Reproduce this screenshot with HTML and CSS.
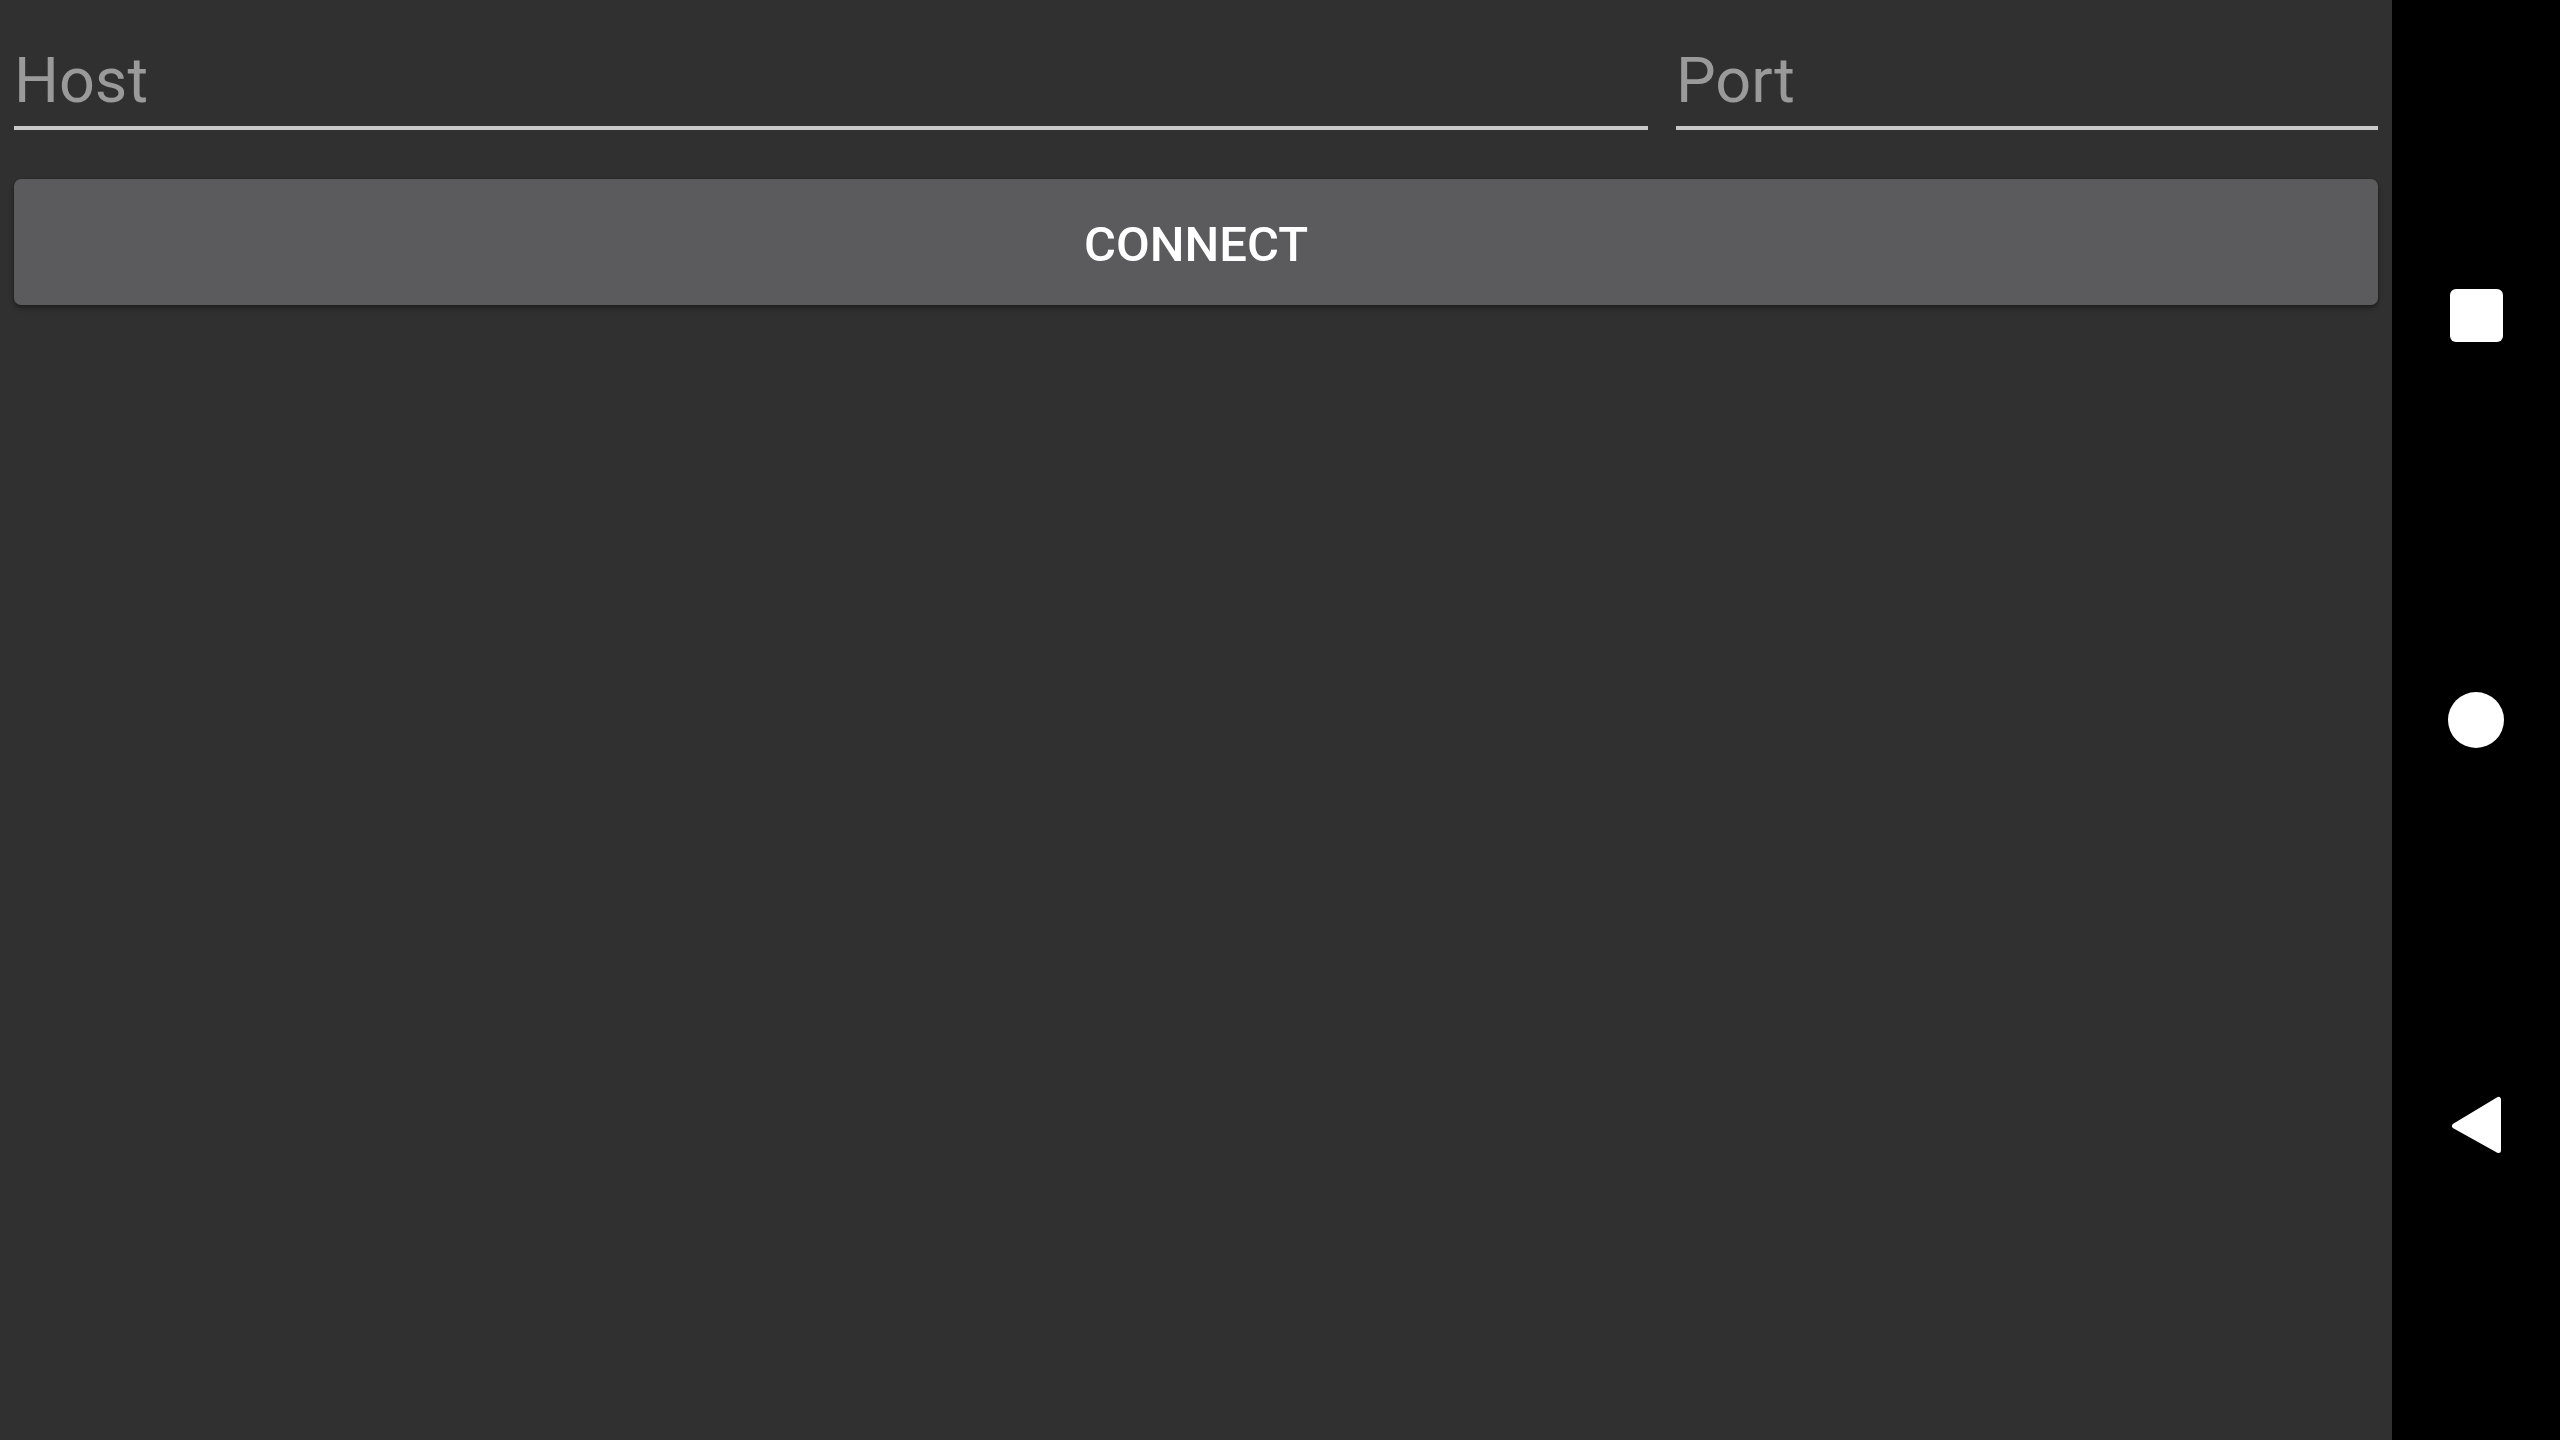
FILE: index.html
```html
<!DOCTYPE html>
<html>
<head>
<meta charset="utf-8">
<title>Connect</title>
<link rel="stylesheet" href="styles.css">
</head>
<body>
<div class="screen">
  <main class="content">
    <div class="fields">
      <div class="field field-host"><span class="hint">Host</span></div>
      <div class="field field-port"><span class="hint">Port</span></div>
    </div>
    <button class="connect">CONNECT</button>
  </main>
  <nav class="navbar">
    <div class="slot"><div class="ico-square"></div></div>
    <div class="slot"><div class="ico-circle"></div></div>
    <div class="slot">
      <svg class="ico-back" width="60" height="60" viewBox="0 0 60 60">
        <path d="M8.5 31 L52.5 4.5 L52.5 55.5 Z" fill="#fff" stroke="#fff" stroke-width="5" stroke-linejoin="round"/>
      </svg>
    </div>
  </nav>
</div>
</body>
</html>
```
FILE: styles.css
```css
html, body {
  margin: 0;
  padding: 0;
  width: 2560px;
  height: 1440px;
  overflow: hidden;
  background: #303030;
  font-family: Roboto, "Noto Sans", sans-serif;
}

.screen {
  display: flex;
  width: 2560px;
  height: 1440px;
}

.content {
  flex: 1;
  display: flex;
  flex-direction: column;
  padding: 0 14px;
  background: #303030;
}

.fields {
  display: flex;
  gap: 28px;
}

.field {
  padding-top: 44px;
  padding-bottom: 8px;
  border-bottom: 4px solid #c9c9c9;
  line-height: 74px;
  height: 74px;
}

.field-host {
  flex: 1;
}

.field-port {
  width: 702px;
  flex: none;
}

.hint {
  font-size: 63px;
  color: #9a9a9a;
  font-weight: 400;
}

.connect {
  margin-top: 49px;
  height: 126px;
  border: none;
  border-radius: 7px;
  background: #5b5b5d;
  color: #ffffff;
  font-family: Roboto, "Noto Sans", sans-serif;
  font-weight: 500;
  font-size: 49px;
  padding: 4px 0 0 0;
  box-shadow: 0 3px 5px rgba(0, 0, 0, 0.35), 0 0 2px rgba(0, 0, 0, 0.25);
}

.navbar {
  width: 168px;
  flex: none;
  background: #000;
  display: flex;
  flex-direction: column;
  justify-content: center;
  align-items: center;
}

.slot {
  height: 405px;
  display: flex;
  align-items: center;
  justify-content: center;
}

.ico-square {
  width: 53px;
  height: 53px;
  border-radius: 6px;
  background: #fff;
}

.ico-circle {
  width: 56px;
  height: 56px;
  border-radius: 50%;
  background: #fff;
}

.ico-back {
  display: block;
}
```
